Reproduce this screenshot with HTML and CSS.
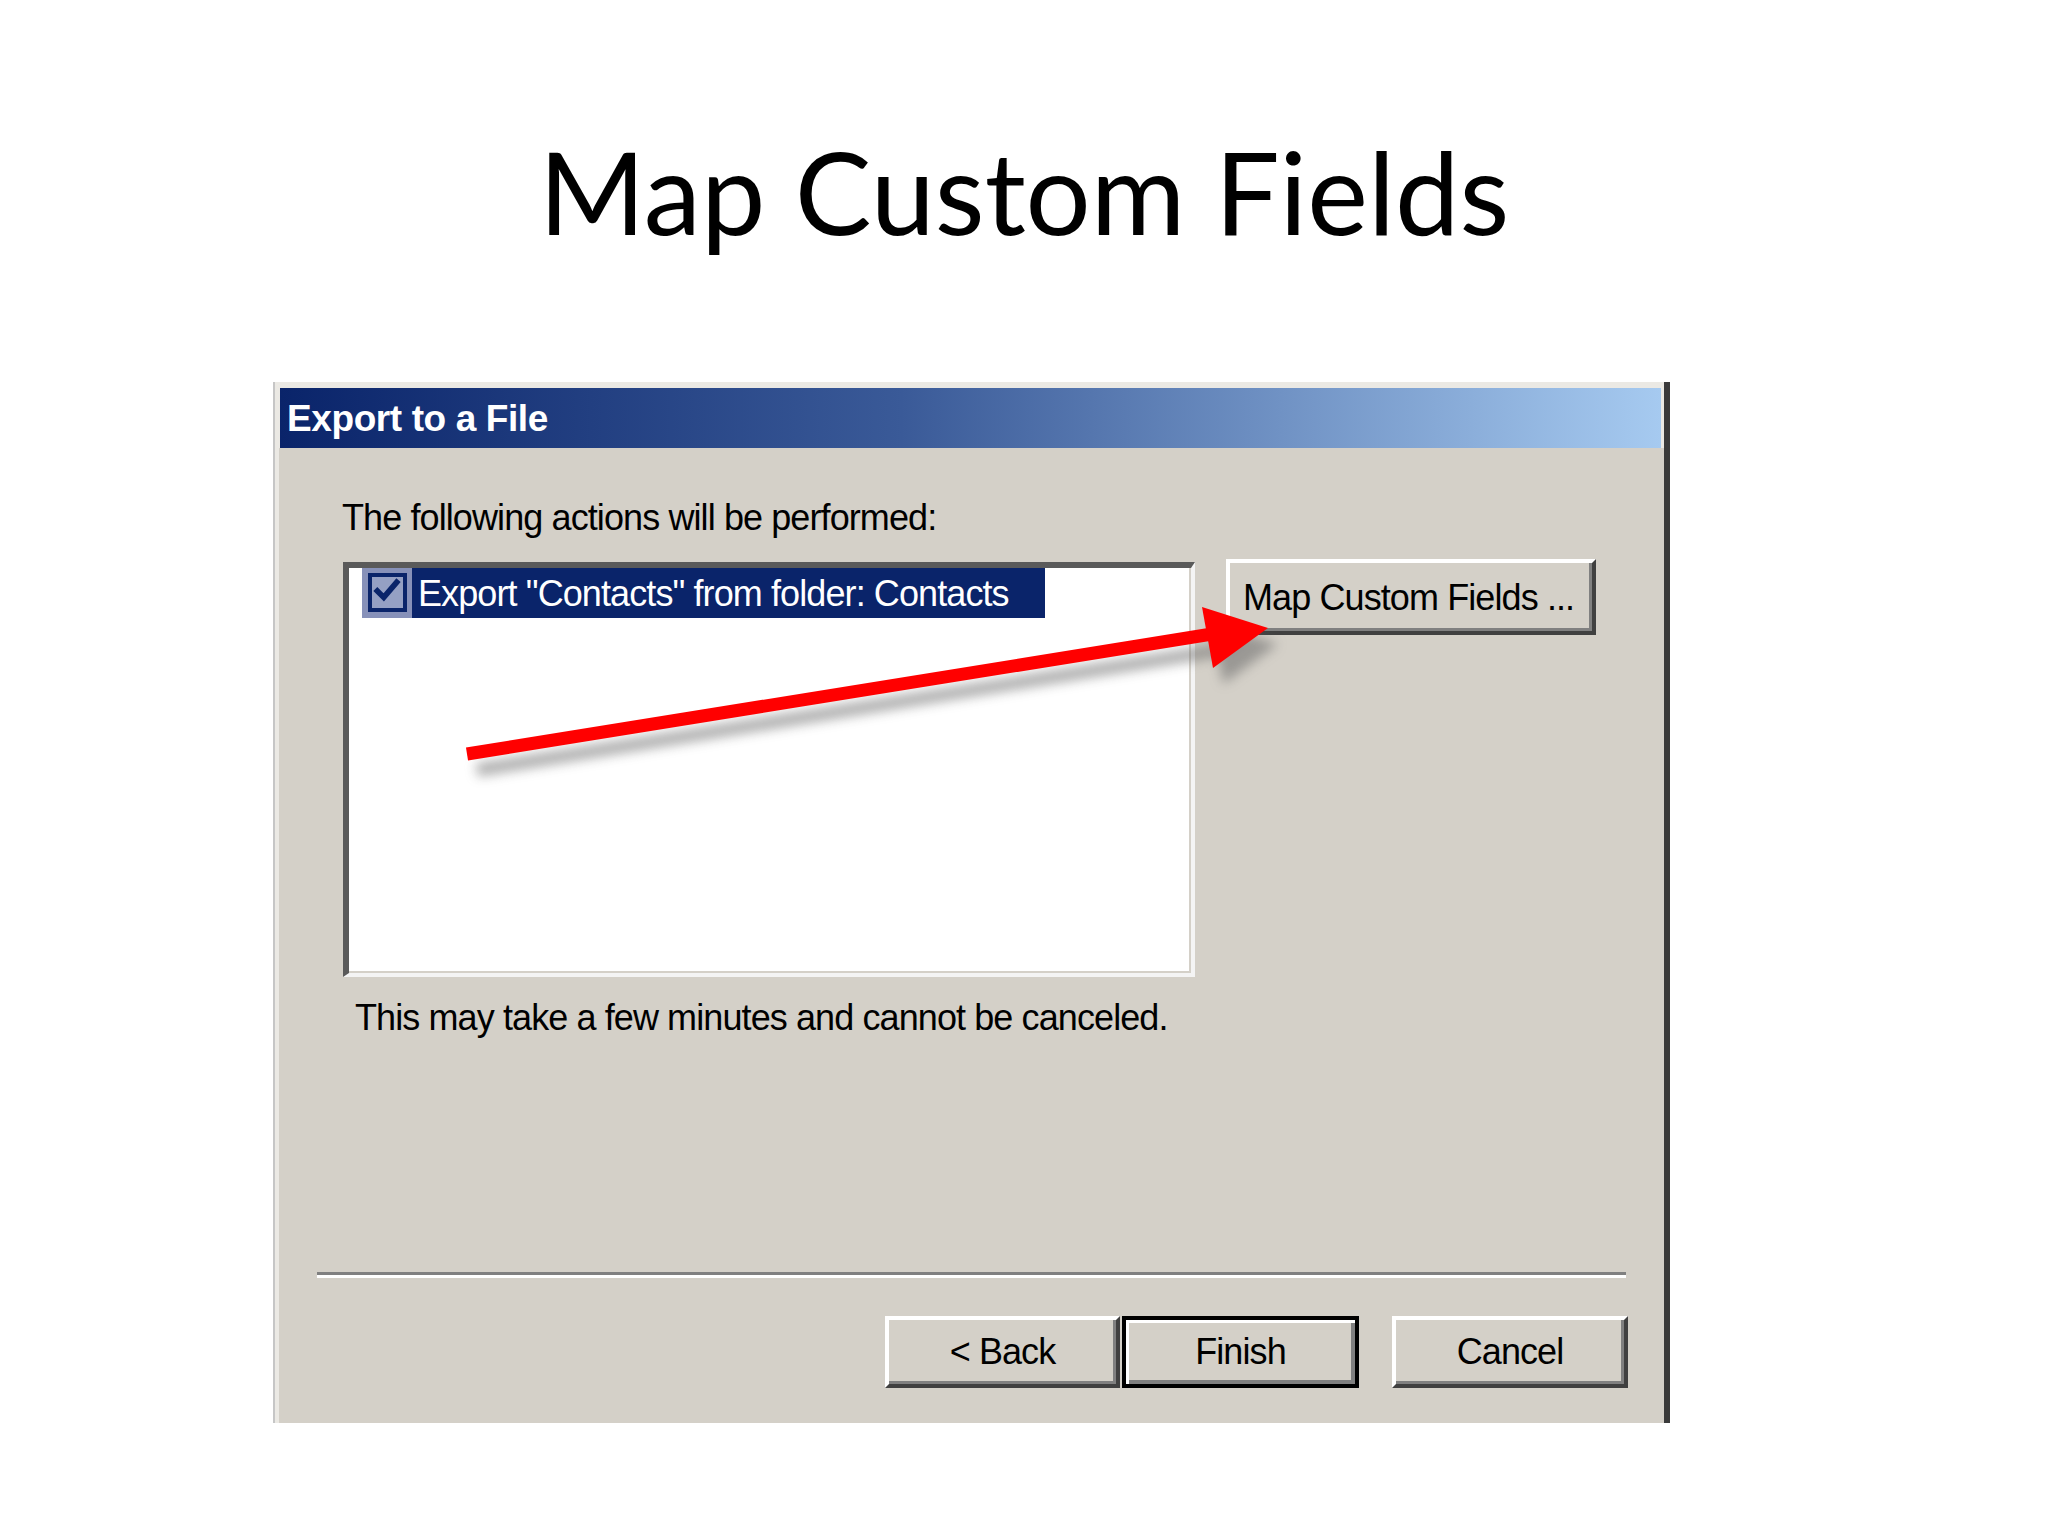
FILE: index.html
```html
<!DOCTYPE html>
<html>
<head>
<meta charset="utf-8">
<link rel="stylesheet" href="styles.css">
</head>
<body>
<div class="slide">
  <h1 class="slide-title">Map Custom Fields</h1>
  <div class="dialog">
    <div class="titlebar">Export to a File</div>
    <div class="client">
      <div class="label">The following actions will be performed:</div>
      <div class="row">
        <div class="listbox">
          <div class="item">
            <span class="check-cell">
              <span class="checkbox">
                <svg viewBox="0 0 13 13" width="28" height="28"><path d="M2 6 L5 9 L11 2" fill="none" stroke="#0a246a" stroke-width="2.6" stroke-linecap="square"/></svg>
              </span>
            </span>
            <span class="item-text">Export "Contacts" from folder: Contacts</span>
          </div>
        </div>
        <button class="btn btn-map">Map Custom Fields ...</button>
      </div>
      <div class="note">This may take a few minutes and cannot be canceled.</div>
      <div class="separator"></div>
      <div class="buttons">
        <button class="btn btn-back">&lt; Back</button>
        <button class="btn btn-finish">Finish</button>
        <button class="btn btn-cancel">Cancel</button>
      </div>
    </div>
  </div>
  <svg class="arrow" width="2048" height="1536" viewBox="0 0 2048 1536">
    <defs>
      <filter id="blur" x="-20%" y="-50%" width="140%" height="200%">
        <feGaussianBlur stdDeviation="6"/>
      </filter>
    </defs>
    <g filter="url(#blur)" opacity="0.55" transform="translate(10,16)">
      <path d="M467 754 L1210 634" stroke="#6a6a6a" stroke-width="13" fill="none"/>
      <polygon points="1202,607 1268,628 1213,668" fill="#6a6a6a"/>
    </g>
    <path d="M467 754 L1212 634" stroke="#ff0000" stroke-width="13" fill="none"/>
    <polygon points="1202,607 1268,628 1213,668" fill="#ff0000"/>
  </svg>
</div>
</body>
</html>
```
FILE: styles.css
```css
html, body {
  margin: 0;
  padding: 0;
  background: #ffffff;
}
.slide {
  position: relative;
  width: 2048px;
  height: 1536px;
  overflow: hidden;
}
.slide-title {
  margin: 0;
  padding-top: 120px;
  height: 140px;
  line-height: 140px;
  font-family: "Lato", "Open Sans", sans-serif;
  font-weight: 400;
  font-size: 115px;
  text-align: center;
  color: #000000;
}
.dialog {
  margin-top: 122px;
  margin-left: 273px;
  width: 1385px;
  border-left: 2px solid #c6c6c6;
  border-right: 6px solid #3a3a3a;
  padding: 6px 0 0 4px;
  background: #ebe9e4;
  display: flex;
  flex-direction: column;
}
.titlebar {
  height: 60px;
  margin-left: 1px;
  margin-right: 3px;
  background: linear-gradient(to right, #0a246a 0%, #3a5a98 45%, #a6caf0 100%);
  color: #ffffff;
  font-family: "Liberation Sans", Arial, sans-serif;
  font-weight: 700;
  font-size: 37px;
  line-height: 62px;
  padding-left: 7px;
  letter-spacing: -0.4px;
}
.client {
  height: 975px;
  background: #d4d0c8;
  display: flex;
  flex-direction: column;
  font-family: "Liberation Sans", Arial, sans-serif;
  font-size: 36px;
  letter-spacing: -0.9px;
  color: #000000;
}
.label {
  margin-top: 48px;
  padding-left: 63px;
  line-height: 44px;
  height: 44px;
}
.row {
  margin-top: 19px;
  display: flex;
  align-items: flex-start;
  padding-left: 64px;
}
.listbox {
  margin-top: 3px;
  width: 852px;
  height: 415px;
  box-sizing: border-box;
  background: #ffffff;
  border-top: 6px solid #5a5a5a;
  border-left: 6px solid #5a5a5a;
  border-right: 4px solid #f4f4f4;
  border-bottom: 4px solid #f4f4f4;
  box-shadow: inset -2px -2px 0 #d4d0c8;
}
.item {
  display: flex;
  height: 50px;
  padding-left: 13px;
}
.check-cell {
  width: 50px;
  height: 50px;
  background: #8791b9;
  display: flex;
  align-items: center;
  justify-content: center;
  box-sizing: border-box;
  padding-bottom: 2px;
}
.checkbox {
  width: 39px;
  height: 39px;
  box-sizing: border-box;
  border: 4px solid #0a246a;
  background: #95a0c4;
  display: flex;
  align-items: center;
  justify-content: center;
}
.item-text {
  box-sizing: border-box;
  width: 633px;
  background: #0a246a;
  color: #ffffff;
  line-height: 52px;
  padding: 0 0 0 6px;
  white-space: nowrap;
}
.btn {
  box-sizing: border-box;
  background: #d4d0c8;
  font-family: "Liberation Sans", Arial, sans-serif;
  font-size: 36px;
  letter-spacing: -0.9px;
  color: #000000;
  border-top: 4px solid #ffffff;
  border-left: 4px solid #ffffff;
  border-right: 4px solid #404040;
  border-bottom: 4px solid #404040;
  box-shadow: inset -3px -3px 0 #808080;
  padding: 0;
  margin: 0;
  height: 72px;
  white-space: nowrap;
}
.btn-map {
  margin-left: 31px;
  width: 370px;
  height: 76px;
  text-align: left;
  padding-left: 13px;
  padding-top: 2px;
}
.note {
  margin-top: 19px;
  padding-left: 76px;
  line-height: 44px;
  height: 44px;
}
.separator {
  margin-top: 232px;
  margin-left: 38px;
  width: 1309px;
  height: 3px;
  background: #808080;
  border-bottom: 3px solid #ffffff;
}
.buttons {
  margin-top: 38px;
  display: flex;
  justify-content: flex-end;
  padding-right: 36px;
}
.btn-back {
  width: 235px;
}
.btn-finish {
  width: 237px;
  margin-left: 2px;
  border: 4px solid #000000;
  box-shadow: inset 3px 3px 0 #ffffff, inset -4px -4px 0 #808080;
}
.btn-cancel {
  width: 236px;
  margin-left: 33px;
}
.arrow {
  position: absolute;
  left: 0;
  top: 0;
  pointer-events: none;
}
```
